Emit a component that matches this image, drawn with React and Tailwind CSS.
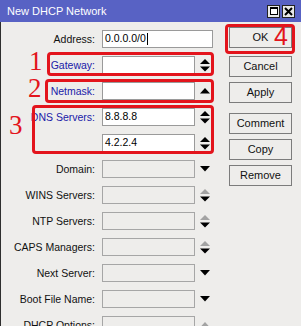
import React from "react";

function Arrows({ type }) {
  const up = type === "updown" || type === "up" || type === "grayup" || type === "grayupdown";
  const down = type === "updown" || type === "down" || type === "grayupdown";
  const upColor = type === "grayup" || type === "grayupdown" ? "#a3a3a3" : "#000";
  if (type === "down") {
    return (
      <svg width="10" height="6" viewBox="0 0 10 6">
        <polygon points="0,0 10,0 5,5.5" fill="#000" />
      </svg>
    );
  }
  if (type === "up" || type === "grayup") {
    return (
      <svg width="10" height="6" viewBox="0 0 10 6">
        <polygon points="0,5.5 10,5.5 5,0" fill={upColor} />
      </svg>
    );
  }
  return (
    <svg width="10" height="13" viewBox="0 0 10 13">
      {up && <polygon points="0,5 10,5 5,0" fill={upColor} />}
      {down && <polygon points="0,7.5 10,7.5 5,12.5" fill="#000" />}
    </svg>
  );
}

function Row({ label, value, blue, white, arrows, wide }) {
  return (
    <div className="flex h-[18px] items-center">
      <div
        className={
          "w-[94px] text-right text-[10.5px] leading-none whitespace-nowrap " +
          (blue ? "text-[#2020a8]" : "text-[#111]")
        }
      >
        {label}
      </div>
      <div
        className={
          "ml-[7px] h-[18px] border flex items-center pl-[2px] text-[10.5px] text-black " +
          (wide ? "w-[111px] " : "w-[93px] ") +
          (white ? "bg-white border-[#9a9a9a]" : "bg-[#eeedeb] border-[#a6a6a6]")
        }
      >
        {value}
      </div>
      {arrows && (
        <div className="w-[19px] flex justify-center items-center">
          <Arrows type={arrows} />
        </div>
      )}
    </div>
  );
}

function Btn({ children, className }) {
  return (
    <div
      className={
        "h-[21px] w-[63px] border border-[#7c7c7c] bg-[#eeedeb] flex items-center justify-center text-[11px] text-[#111] " +
        (className || "")
      }
    >
      {children}
    </div>
  );
}

export default function App() {
  const red = "border-[#e3141c]";
  return (
    <div
      className="relative w-[301px] h-[326px] overflow-hidden bg-[#eeedeb]"
      style={{ fontFamily: '"Liberation Sans", Arial, sans-serif' }}
    >
      {/* title bar */}
      <div className="h-[22px] bg-[#5862c4] flex items-center pl-[7px] pr-[6px]">
        <span className="text-white text-[11px] leading-none">New DHCP Network</span>
        <div className="ml-auto flex gap-[2px]">
          <div className="w-[13px] h-[13px] bg-[#e8e8e8] border border-[#222] flex items-center justify-center">
            <div className="w-[8px] h-[8px] border border-black border-t-2 bg-white" />
          </div>
          <div className="w-[13px] h-[13px] bg-[#e8e8e8] border border-[#222] flex items-center justify-center">
            <svg width="9" height="9" viewBox="0 0 9 9">
              <path d="M1 1 L8 8 M8 1 L1 8" stroke="#000" strokeWidth="2" />
            </svg>
          </div>
        </div>
      </div>

      {/* body */}
      <div className="flex border-l border-[#2e2e2e] h-[304px]">
        <div className="flex flex-col gap-[8px] pt-[8px] w-[227px]">
          <Row label="Address:" value={<span>0.0.0.0/0<span className="inline-block w-[1px] h-[12px] bg-black align-middle ml-[1px]" /></span>} white wide />
          <Row label="Gateway:" blue white arrows="updown" />
          <Row label="Netmask:" blue white arrows="up" />
          <Row label="DNS Servers:" blue white value="8.8.8.8" arrows="updown" />
          <Row label="" white value="4.2.2.4" arrows="updown" />
          <Row label="Domain:" arrows="down" />
          <Row label="WINS Servers:" arrows="grayupdown" />
          <Row label="NTP Servers:" arrows="grayupdown" />
          <Row label="CAPS Managers:" arrows="grayupdown" />
          <Row label="Next Server:" arrows="down" />
          <Row label="Boot File Name:" arrows="down" />
          <Row label="DHCP Options:" arrows="grayup" />
        </div>
        <div className="flex flex-col pt-[5px] ml-[1px]">
          <Btn>OK</Btn>
          <Btn className="mt-[8px]">Cancel</Btn>
          <Btn className="mt-[5px]">Apply</Btn>
          <Btn className="mt-[10px]">Comment</Btn>
          <Btn className="mt-[5px]">Copy</Btn>
          <Btn className="mt-[5px]">Remove</Btn>
        </div>
      </div>

      {/* annotations */}
      <div className={"absolute left-[47px] top-[52px] w-[167px] h-[24px] border-[3px] rounded-[4px] " + red} />
      <div className={"absolute left-[45px] top-[79px] w-[169px] h-[24px] border-[3px] rounded-[4px] " + red} />
      <div className={"absolute left-[32px] top-[105px] w-[182px] h-[49px] border-[3px] rounded-[4px] " + red} />
      <div className={"absolute left-[225px] top-[24px] w-[70px] h-[30px] border-[3px] rounded-[4px] " + red} />

      <div className="absolute left-[29px] top-[48px] text-[27px] leading-none text-[#e3141c]" style={{ fontFamily: '"Liberation Serif", serif' }}>1</div>
      <div className="absolute left-[28px] top-[75px] text-[27px] leading-none text-[#e3141c]" style={{ fontFamily: '"Liberation Serif", serif' }}>2</div>
      <div className="absolute left-[9px] top-[112px] text-[27px] leading-none text-[#e3141c]" style={{ fontFamily: '"Liberation Serif", serif' }}>3</div>
      <div className="absolute left-[274px] top-[24px] text-[25px] leading-none text-[#e3141c]" style={{ fontFamily: '"Liberation Sans", sans-serif', fontWeight: 300 }}>4</div>
    </div>
  );
}
